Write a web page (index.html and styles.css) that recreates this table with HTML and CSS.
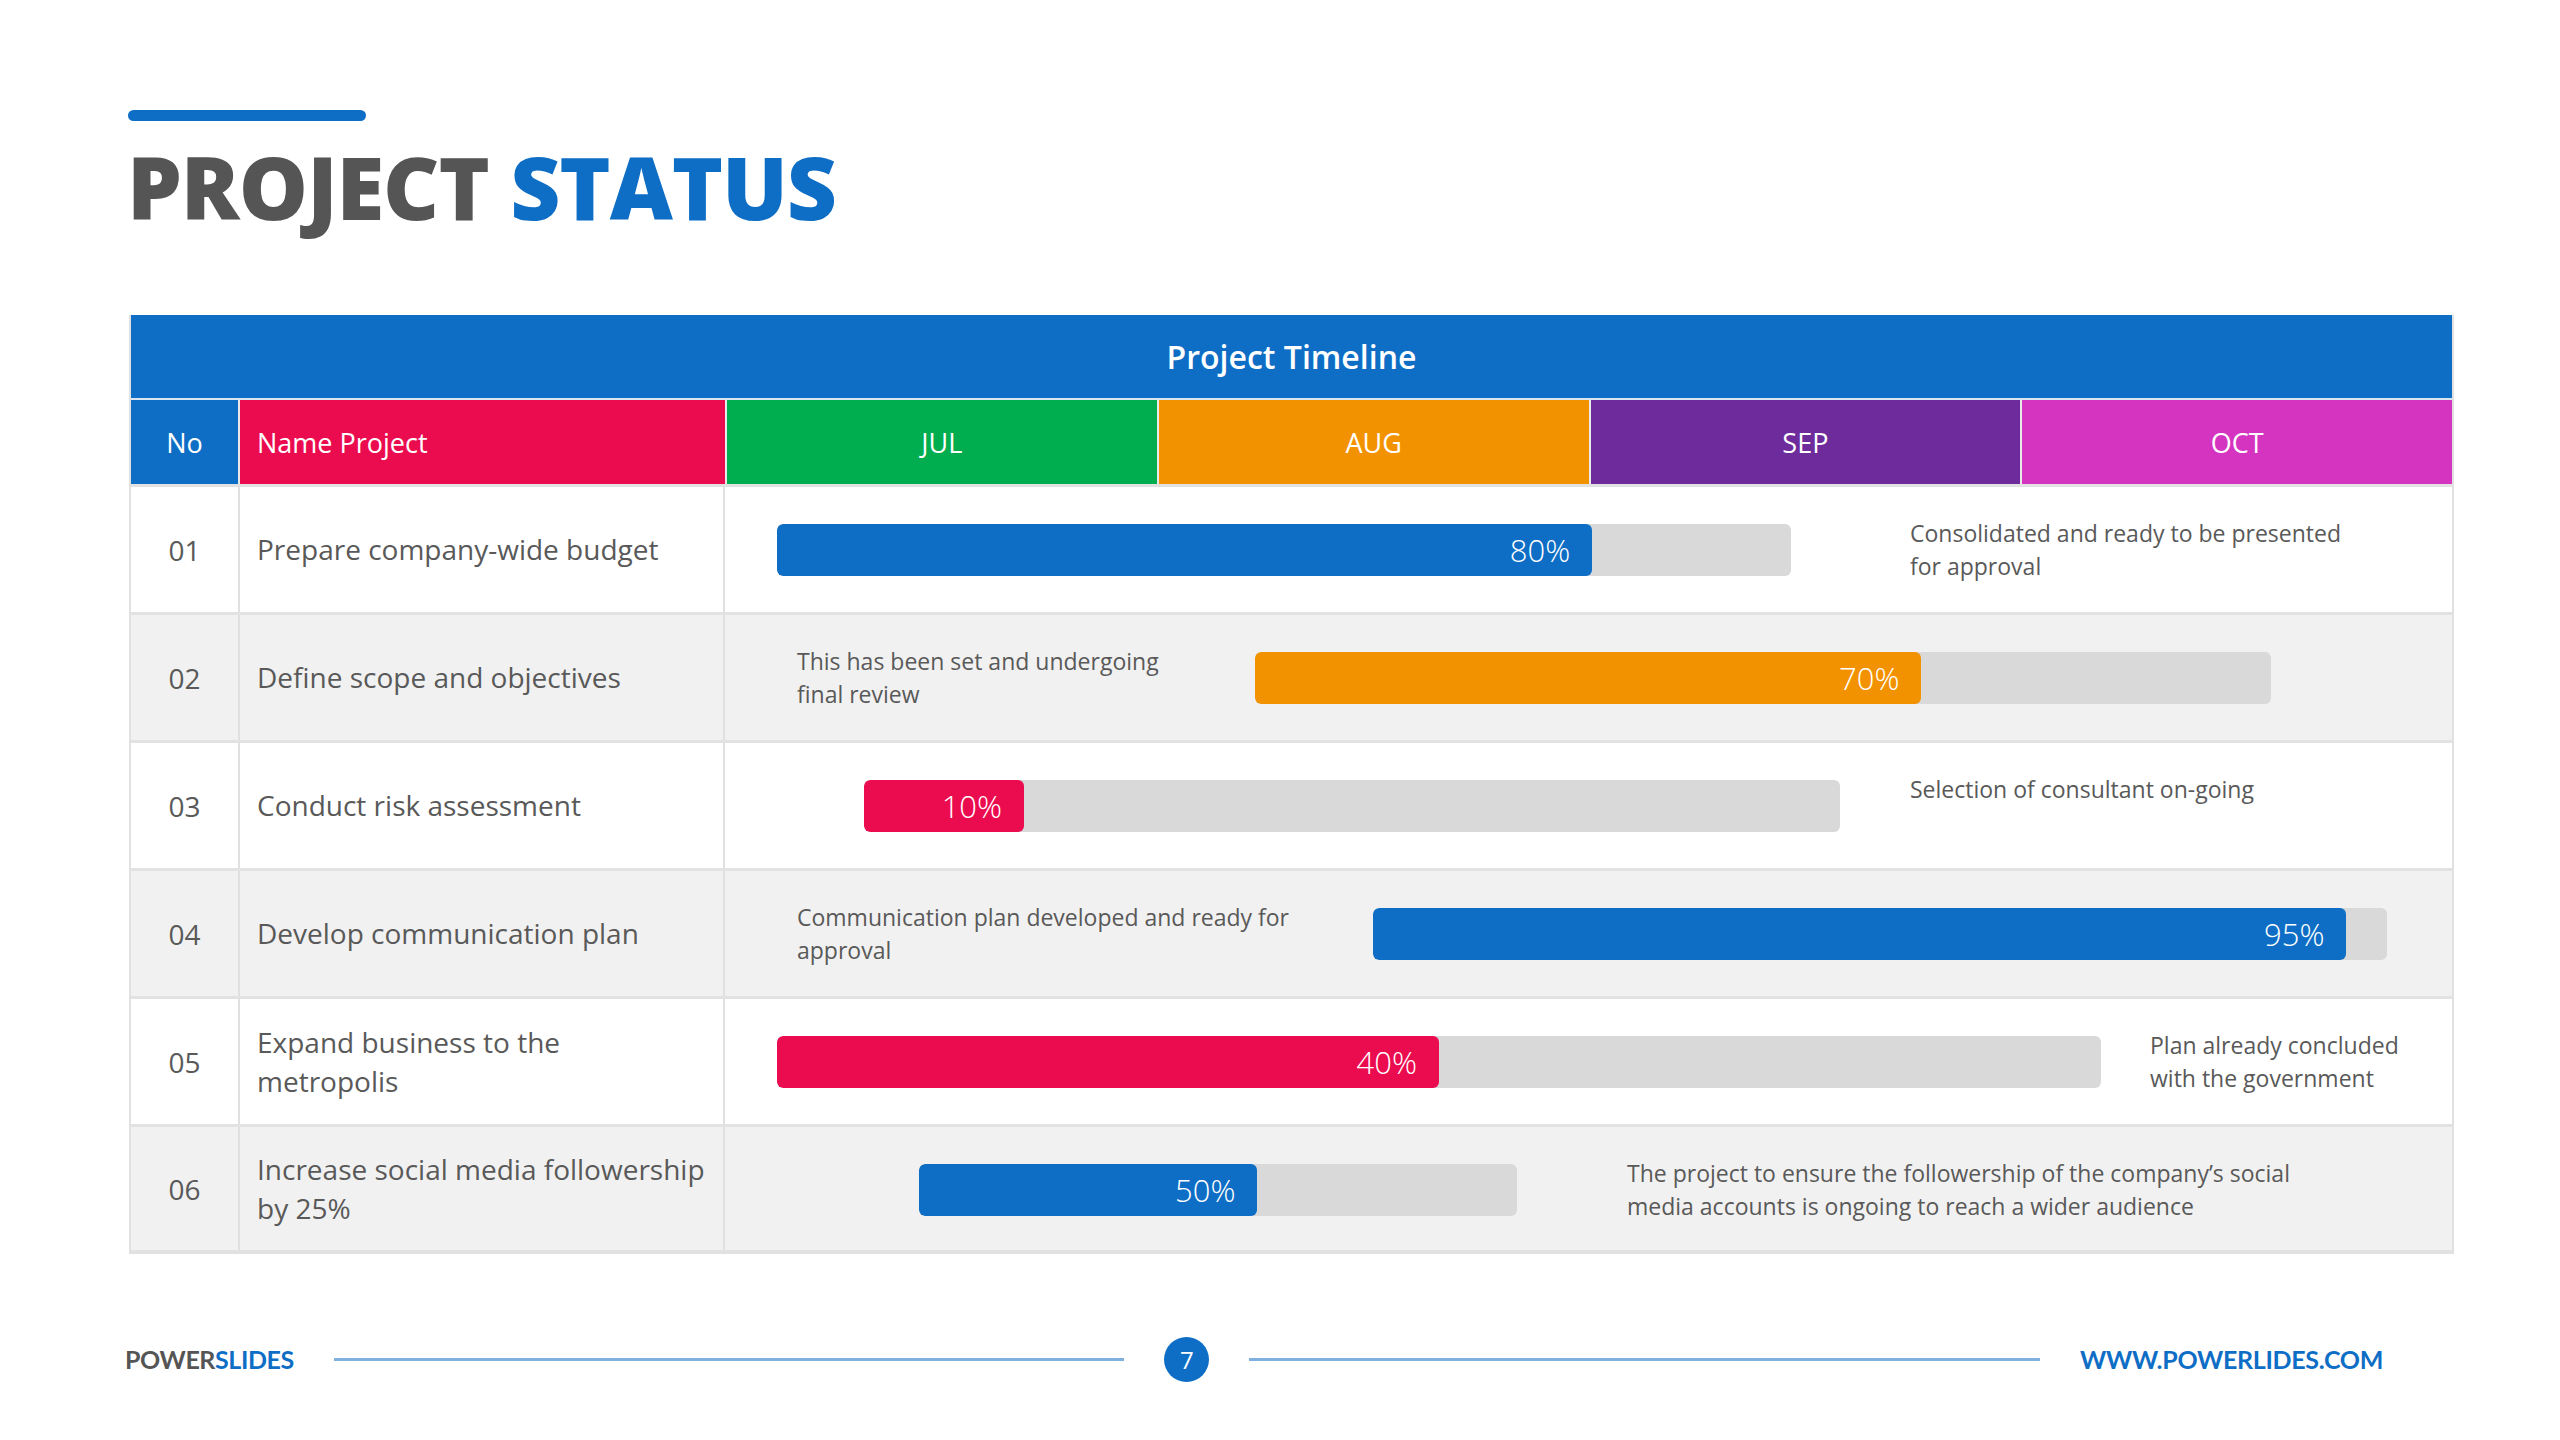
FILE: index.html
```html
<!DOCTYPE html>
<html lang="en">
<head>
<meta charset="utf-8">
<title>Project Status</title>
<link rel="stylesheet" href="styles.css">
</head>
<body>
<div class="slide">
  <div class="accent"></div>
  <h1 class="title"><span class="t-gray">PROJECT</span> <span class="t-blue">STATUS</span></h1>

  <div class="table">
    <div class="cap">Project Timeline</div>
    <div class="head">
      <div class="h h-no">No</div>
      <div class="h h-name">Name Project</div>
      <div class="h h-month jul">JUL</div>
      <div class="h h-month aug">AUG</div>
      <div class="h h-month sep">SEP</div>
      <div class="h h-month oct">OCT</div>
    </div>

    <div class="row">
      <div class="c-no">01</div>
      <div class="c-name">Prepare company-wide budget</div>
      <div class="c-time">
        <div class="track" style="margin-left:52px;width:1014px"><div class="fill blue" style="width:80.4%">80%</div></div>
        <div class="note" style="margin-left:119px">Consolidated and ready to be presented<br>for approval</div>
      </div>
    </div>

    <div class="row alt">
      <div class="c-no">02</div>
      <div class="c-name">Define scope and objectives</div>
      <div class="c-time">
        <div class="note before">This has been set and undergoing<br>final review</div>
        <div class="track" style="margin-left:0;width:1016px"><div class="fill orange" style="width:65.6%">70%</div></div>
      </div>
    </div>

    <div class="row">
      <div class="c-no">03</div>
      <div class="c-name">Conduct risk assessment</div>
      <div class="c-time">
        <div class="track" style="margin-left:139px;width:976px"><div class="fill red" style="width:16.4%">10%</div></div>
        <div class="note" style="margin-left:70px">Selection of consultant on-going</div>
      </div>
    </div>

    <div class="row alt">
      <div class="c-no">04</div>
      <div class="c-name">Develop communication plan</div>
      <div class="c-time">
        <div class="note before">Communication plan developed and ready for<br>approval</div>
        <div class="track" style="margin-left:118px;width:1014px"><div class="fill blue" style="width:96%">95%</div></div>
      </div>
    </div>

    <div class="row">
      <div class="c-no">05</div>
      <div class="c-name">Expand business to the<br>metropolis</div>
      <div class="c-time">
        <div class="track" style="margin-left:52px;width:1324px"><div class="fill red" style="width:50%">40%</div></div>
        <div class="note" style="margin-left:49px">Plan already concluded<br>with the government</div>
      </div>
    </div>

    <div class="row alt last">
      <div class="c-no">06</div>
      <div class="c-name">Increase social media followership<br>by 25%</div>
      <div class="c-time">
        <div class="track" style="margin-left:194px;width:598px"><div class="fill blue" style="width:56.6%">50%</div></div>
        <div class="note" style="margin-left:110px">The project to ensure the followership of the company’s social<br>media accounts is ongoing to reach a wider audience</div>
      </div>
    </div>
  </div>

  <footer class="footer">
    <div class="brand"><span class="b-gray">POWER</span><span class="b-blue">SLIDES</span></div>
    <div class="rule"></div>
    <div class="page">7</div>
    <div class="rule"></div>
    <div class="url">WWW.POWERLIDES.COM</div>
  </footer>
</div>
</body>
</html>
```

FILE: styles.css
```css
* { box-sizing: border-box; }

html, body {
  margin: 0;
  padding: 0;
  background: #ffffff;
}

.slide {
  width: 2560px;
  height: 1440px;
  padding: 110px 0 0 128px;
  font-family: "Open Sans", "Liberation Sans", sans-serif;
  color: #595959;
  overflow: hidden;
}

.accent {
  width: 238px;
  height: 11px;
  border-radius: 6px;
  background: #0e6ec5;
}

.title {
  margin: 21px 0 0 -1px;
  font-family: "Open Sans", "Liberation Sans", sans-serif;
  font-weight: 800;
  font-size: 87px;
  line-height: 88px;
  letter-spacing: -1.1px;
}

.t-gray { color: #555555; }
.t-blue { color: #0e6ec5; }

/* ---------- table ---------- */
.table {
  margin: 85px 0 0 1px;
  width: 2325px;
  border: 2px solid #e1e1e1;
  border-top: none;
}

.cap {
  height: 85px;
  background: #0e6ec5;
  color: #ffffff;
  font-weight: 600;
  font-size: 32px;
  display: flex;
  align-items: center;
  justify-content: center;
  border-bottom: 2px solid #d9e6f2;
}

.head {
  display: grid;
  grid-template-columns: 107px 487px repeat(4, 1fr);
  height: 84px;
}

.h {
  display: flex;
  align-items: center;
  color: #ffffff;
  font-size: 27px;
  border-left: 2px solid #e9e9e9;
}

.h-no {
  justify-content: center;
  background: #0e6ec5;
  border-left: none;
}

.h-name {
  background: #eb0c4f;
  padding-left: 17px;
}

.h-month { justify-content: center; }
.jul { background: #00ad4f; }
.aug { background: #f39200; }
.sep { background: #6e2b9b; }
.oct { background: #d534c0; }

.row {
  display: grid;
  grid-template-columns: 107px 487px 1fr;
  height: 128px;
  background: #ffffff;
  border-top: 3px solid #e2e2e2;
}

.row.alt { background: #f1f1f1; }
.row.last { border-bottom: 2px solid #e2e2e2; }

.c-no {
  display: flex;
  align-items: center;
  justify-content: center;
  font-size: 28px;
  color: #595959;
}

.c-name {
  display: flex;
  align-items: center;
  padding-left: 17px;
  font-size: 28px;
  line-height: 39px;
  color: #595959;
  border-left: 2px solid #e0e0e0;
  border-right: 2px solid #e0e0e0;
}

.c-time {
  display: flex;
  align-items: flex-start;
  padding-top: 37px;
}

.track {
  flex: none;
  height: 52px;
  border-radius: 6px;
  background: #d9d9d9;
  overflow: hidden;
}

.fill {
  height: 100%;
  border-radius: 6px;
  display: flex;
  align-items: center;
  justify-content: flex-end;
  padding-right: 22px;
  color: #ffffff;
  font-weight: 300;
  font-size: 31px;
}

.fill.blue { background: #0e6ec5; }
.fill.orange { background: #f39200; }
.fill.red { background: #eb0c4f; }

.note {
  flex: none;
  margin-top: -7px;
  font-size: 23px;
  line-height: 33px;
  color: #595959;
  white-space: nowrap;
}

.note.before {
  margin-left: 72px;
  width: 458px;
}

/* ---------- footer ---------- */
.footer {
  margin: 82px 0 0 -3px;
  width: 2258px;
  height: 46px;
  display: flex;
  align-items: center;
  font-family: "Lato", "Open Sans", sans-serif;
  font-weight: 700;
}

.brand {
  font-size: 25px;
  letter-spacing: -0.4px;
}

.b-gray { color: #555555; }
.b-blue { color: #0e6ec5; }

.rule {
  flex: 1;
  height: 3px;
  background: #7fb0de;
  margin: 0 40px;
}

.page {
  width: 45px;
  height: 45px;
  border-radius: 50%;
  background: #0e6ec5;
  color: #ffffff;
  font-family: "Open Sans", sans-serif;
  font-weight: 400;
  font-size: 24px;
  display: flex;
  align-items: center;
  justify-content: center;
}

.url {
  font-size: 25px;
  color: #0e6ec5;
  letter-spacing: -0.3px;
}
```
